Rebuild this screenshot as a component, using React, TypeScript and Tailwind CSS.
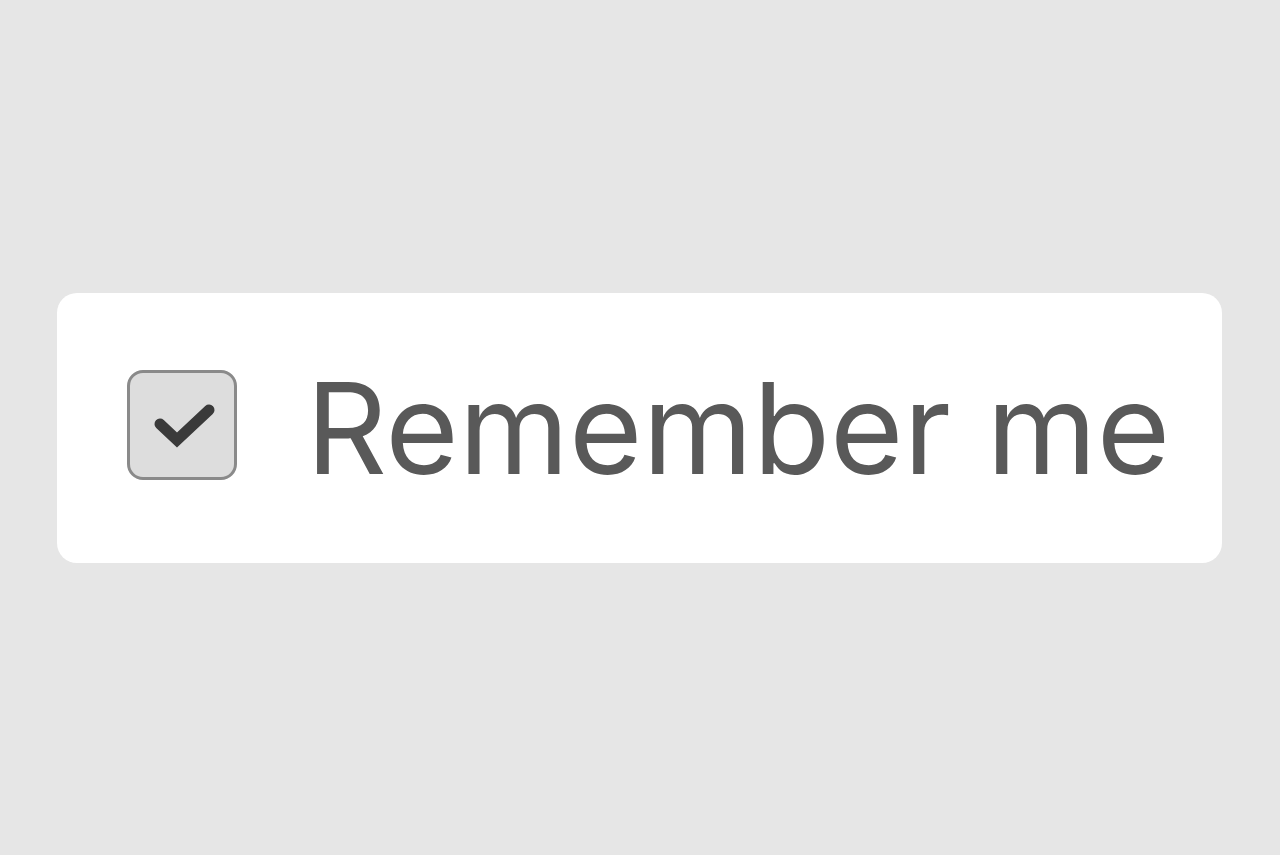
export default function App() {
  return (
    <div
      className="w-full h-[855px] bg-[#e6e6e6] flex items-center"
      style={{ fontFamily: 'Inter, "Noto Sans", sans-serif' }}
    >
      <label className="ml-[57px] w-[1165px] h-[270px] bg-white rounded-[20px] flex items-center pl-[70px]">
        <span className="mb-[6px] w-[110px] h-[110px] shrink-0 rounded-[16px] border-[3px] border-[#8a8a8a] bg-[#dddddd] flex items-center justify-center">
          <svg width="104" height="104" viewBox="0 0 104 104" className="-ml-[3px] -mt-[3px]">
            <polyline
              points="31,53 48,69 80,39"
              fill="none"
              stroke="#3a3a3a"
              strokeWidth="11"
              strokeLinecap="round"
              strokeLinejoin="miter"
              style={{ filter: 'blur(0.6px)' }}
            />
          </svg>
        </span>
        <span className="ml-[69px] text-[126px] leading-none text-[#595959] whitespace-nowrap">
          Remember me
        </span>
      </label>
    </div>
  );
}
